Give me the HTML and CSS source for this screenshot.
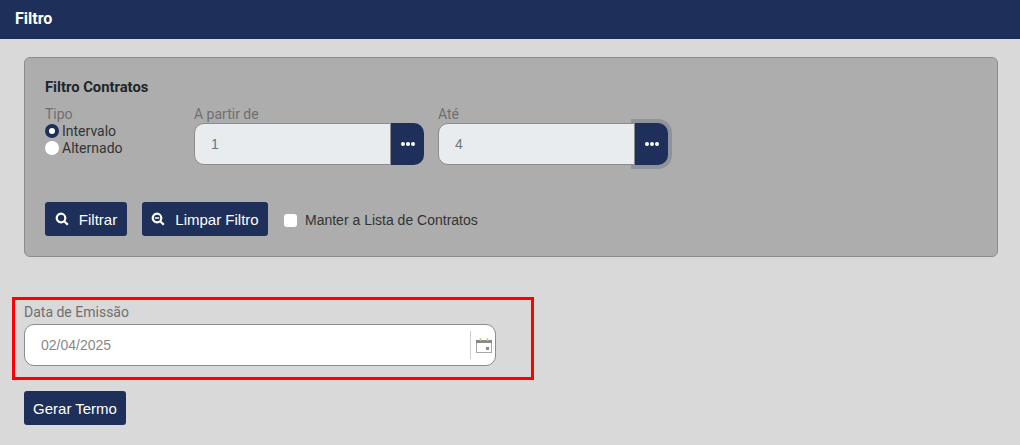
FILE: index.html
```html
<!DOCTYPE html>
<html lang="pt-BR">
<head>
  <meta charset="UTF-8">
  <title>Filtro</title>
  <link rel="stylesheet" href="styles.css">
</head>
<body>

  <header class="page-header">Filtro</header>

  <section class="filter-panel">
    <h2 class="panel-title">Filtro Contratos</h2>

    <div class="filter-row">
      <div class="type-group">
        <span class="field-label">Tipo</span>
        <label class="radio-line"><span class="radio radio-on"></span>Intervalo</label>
        <label class="radio-line"><span class="radio"></span>Alternado</label>
      </div>

      <div class="range-field">
        <span class="field-label">A partir de</span>
        <div class="range-input">
          <span class="range-value">1</span>
          <button type="button" class="dots-button"><span></span><span></span><span></span></button>
        </div>
      </div>

      <div class="range-field">
        <span class="field-label">Até</span>
        <div class="range-input">
          <span class="range-value">4</span>
          <button type="button" class="dots-button dots-focus"><span></span><span></span><span></span></button>
        </div>
      </div>
    </div>

    <div class="action-row">
      <button type="button" class="btn btn-filter">
        <svg class="btn-icon" viewBox="0 0 14 14"><circle cx="6" cy="6" r="4.3" /><path d="M9.2 9.2l3.6 3.6" /></svg>
        Filtrar
      </button>
      <button type="button" class="btn btn-clear">
        <svg class="btn-icon" viewBox="0 0 14 14"><circle cx="6" cy="6" r="4.3" /><path d="M9.2 9.2l3.6 3.6" /><path class="icon-thin" d="M3.8 6h4.4" /></svg>
        Limpar Filtro
      </button>
      <label class="keep-list"><span class="checkbox"></span>Manter a Lista de Contratos</label>
    </div>
  </section>

  <section class="date-box">
    <span class="field-label">Data de Emissão</span>
    <div class="date-input">
      <span class="date-value">02/04/2025</span>
      <span class="date-divider"></span>
      <svg class="calendar" viewBox="0 0 16 15">
        <rect class="cal-body" x="0.5" y="2.5" width="15" height="12" />
        <path class="cal-top" d="M0 2h16v3H0z" />
        <path class="cal-ring" d="M4.5 0v3M11.5 0v3" />
        <rect class="cal-day" x="10" y="9" width="3" height="3" />
      </svg>
    </div>
  </section>

  <button type="button" class="btn btn-generate">Gerar Termo</button>

</body>
</html>
```

FILE: styles.css
```css
/* General Styles */
body {
  font-family: Roboto, 'Liberation Sans', sans-serif;
  background-color: #d9d9d9;
  margin: 0;
  padding: 0;
  color: #212529;
  font-size: 14px;
}

.page-header {
  height: 39px;
  line-height: 37px;
  padding-left: 15px;
  box-sizing: border-box;
  background-color: #1e3059;
  color: #ffffff;
  font-size: 16px;
  font-weight: 700;
}

/* Filter panel */
.filter-panel {
  height: 200px;
  box-sizing: border-box;
  margin: 18px 22px 0 24px;
  padding: 21px 20px 0;
  background-color: #adadad;
  border: 1px solid #8c8c8c;
  border-radius: 6px;
}

.panel-title {
  margin: 0;
  font-size: 14.8px;
  line-height: 17px;
  font-weight: 700;
  color: #212529;
}

.filter-row {
  display: flex;
  margin-top: 10px;
}

.field-label {
  display: block;
  font-size: 14px;
  line-height: 17px;
  color: #6f6f6f;
}

.type-group {
  width: 149px;
}

.radio-line {
  display: flex;
  align-items: center;
  height: 17px;
  gap: 3px;
  color: #333333;
  position: relative;
  top: -1px;
}

.radio {
  width: 14px;
  height: 14px;
  box-sizing: border-box;
  border-radius: 50%;
  background-color: #ffffff;
}

.radio-on {
  border: 4px solid #1e3059;
}

.range-field {
  width: 230px;
  margin-right: 14px;
}

.range-input {
  display: flex;
  height: 42px;
}

.range-value {
  flex: 1;
  position: relative;
  z-index: 1;
  box-sizing: border-box;
  padding-left: 16px;
  line-height: 40px;
  font-family: 'Liberation Sans', sans-serif;
  color: #6c757d;
  background-color: #e9ecef;
  border: 1px solid #8c8c8c;
  border-radius: 10px 0 0 10px;
}

.dots-button {
  display: flex;
  align-items: center;
  justify-content: center;
  gap: 1px;
  width: 33px;
  height: 42px;
  padding: 0;
  border: none;
  border-radius: 0 10px 10px 0;
  background-color: #1e3059;
}

.dots-button span {
  width: 4px;
  height: 4px;
  border-radius: 50%;
  background-color: #ffffff;
}

.dots-focus {
  box-shadow: 0 0 0 4px #8f939c;
}

/* Buttons */
.action-row {
  display: flex;
  align-items: center;
  margin-top: 37px;
}

.btn {
  display: flex;
  align-items: center;
  justify-content: center;
  height: 34px;
  padding: 0;
  border: none;
  border-radius: 3px;
  background-color: #1e3059;
  color: #ffffff;
  font-family: 'Liberation Sans', sans-serif;
  font-size: 15px;
}

.btn-filter {
  width: 82px;
  gap: 10px;
}

.btn-clear {
  width: 126px;
  gap: 10px;
  margin-left: 15px;
}

.btn-icon {
  width: 14px;
  height: 14px;
  fill: none;
  stroke: #ffffff;
  stroke-width: 2.2;
}

.icon-thin {
  stroke-width: 1.5;
}

.keep-list {
  display: flex;
  align-items: center;
  gap: 8px;
  margin-left: 16px;
  font-family: 'Liberation Sans', sans-serif;
  color: #333333;
  position: relative;
  top: 1px;
}

.checkbox {
  width: 13px;
  height: 13px;
  border-radius: 3px;
  background-color: #ffffff;
}

/* Date field */
.date-box {
  width: 522px;
  height: 83px;
  box-sizing: border-box;
  margin: 40px 0 0 12px;
  padding: 4px 9px 0;
  border: 3px solid #ff0000;
}

.date-input {
  display: flex;
  align-items: center;
  width: 472px;
  height: 42px;
  box-sizing: border-box;
  margin-top: 3px;
  padding: 0 3px 0 16px;
  border: 1px solid #8c8c8c;
  border-radius: 10px;
  background-color: #ffffff;
}

.date-value {
  flex: 1;
  font-family: 'Liberation Sans', sans-serif;
  color: #888888;
}

.date-divider {
  width: 1px;
  height: 28px;
  margin-right: 5px;
  background-color: #cfcfcf;
}

.calendar {
  width: 16px;
  height: 15px;
}

.cal-top {
  fill: #8a8a8a;
}

.cal-day {
  fill: #8a8a8a;
}

.cal-ring {
  fill: none;
  stroke: #b5c9a0;
  stroke-width: 1.5;
}

.cal-body {
  fill: none;
  stroke: #a8a8a8;
}

.btn-generate {
  width: 102px;
  margin: 11px 0 0 24px;
}
```
